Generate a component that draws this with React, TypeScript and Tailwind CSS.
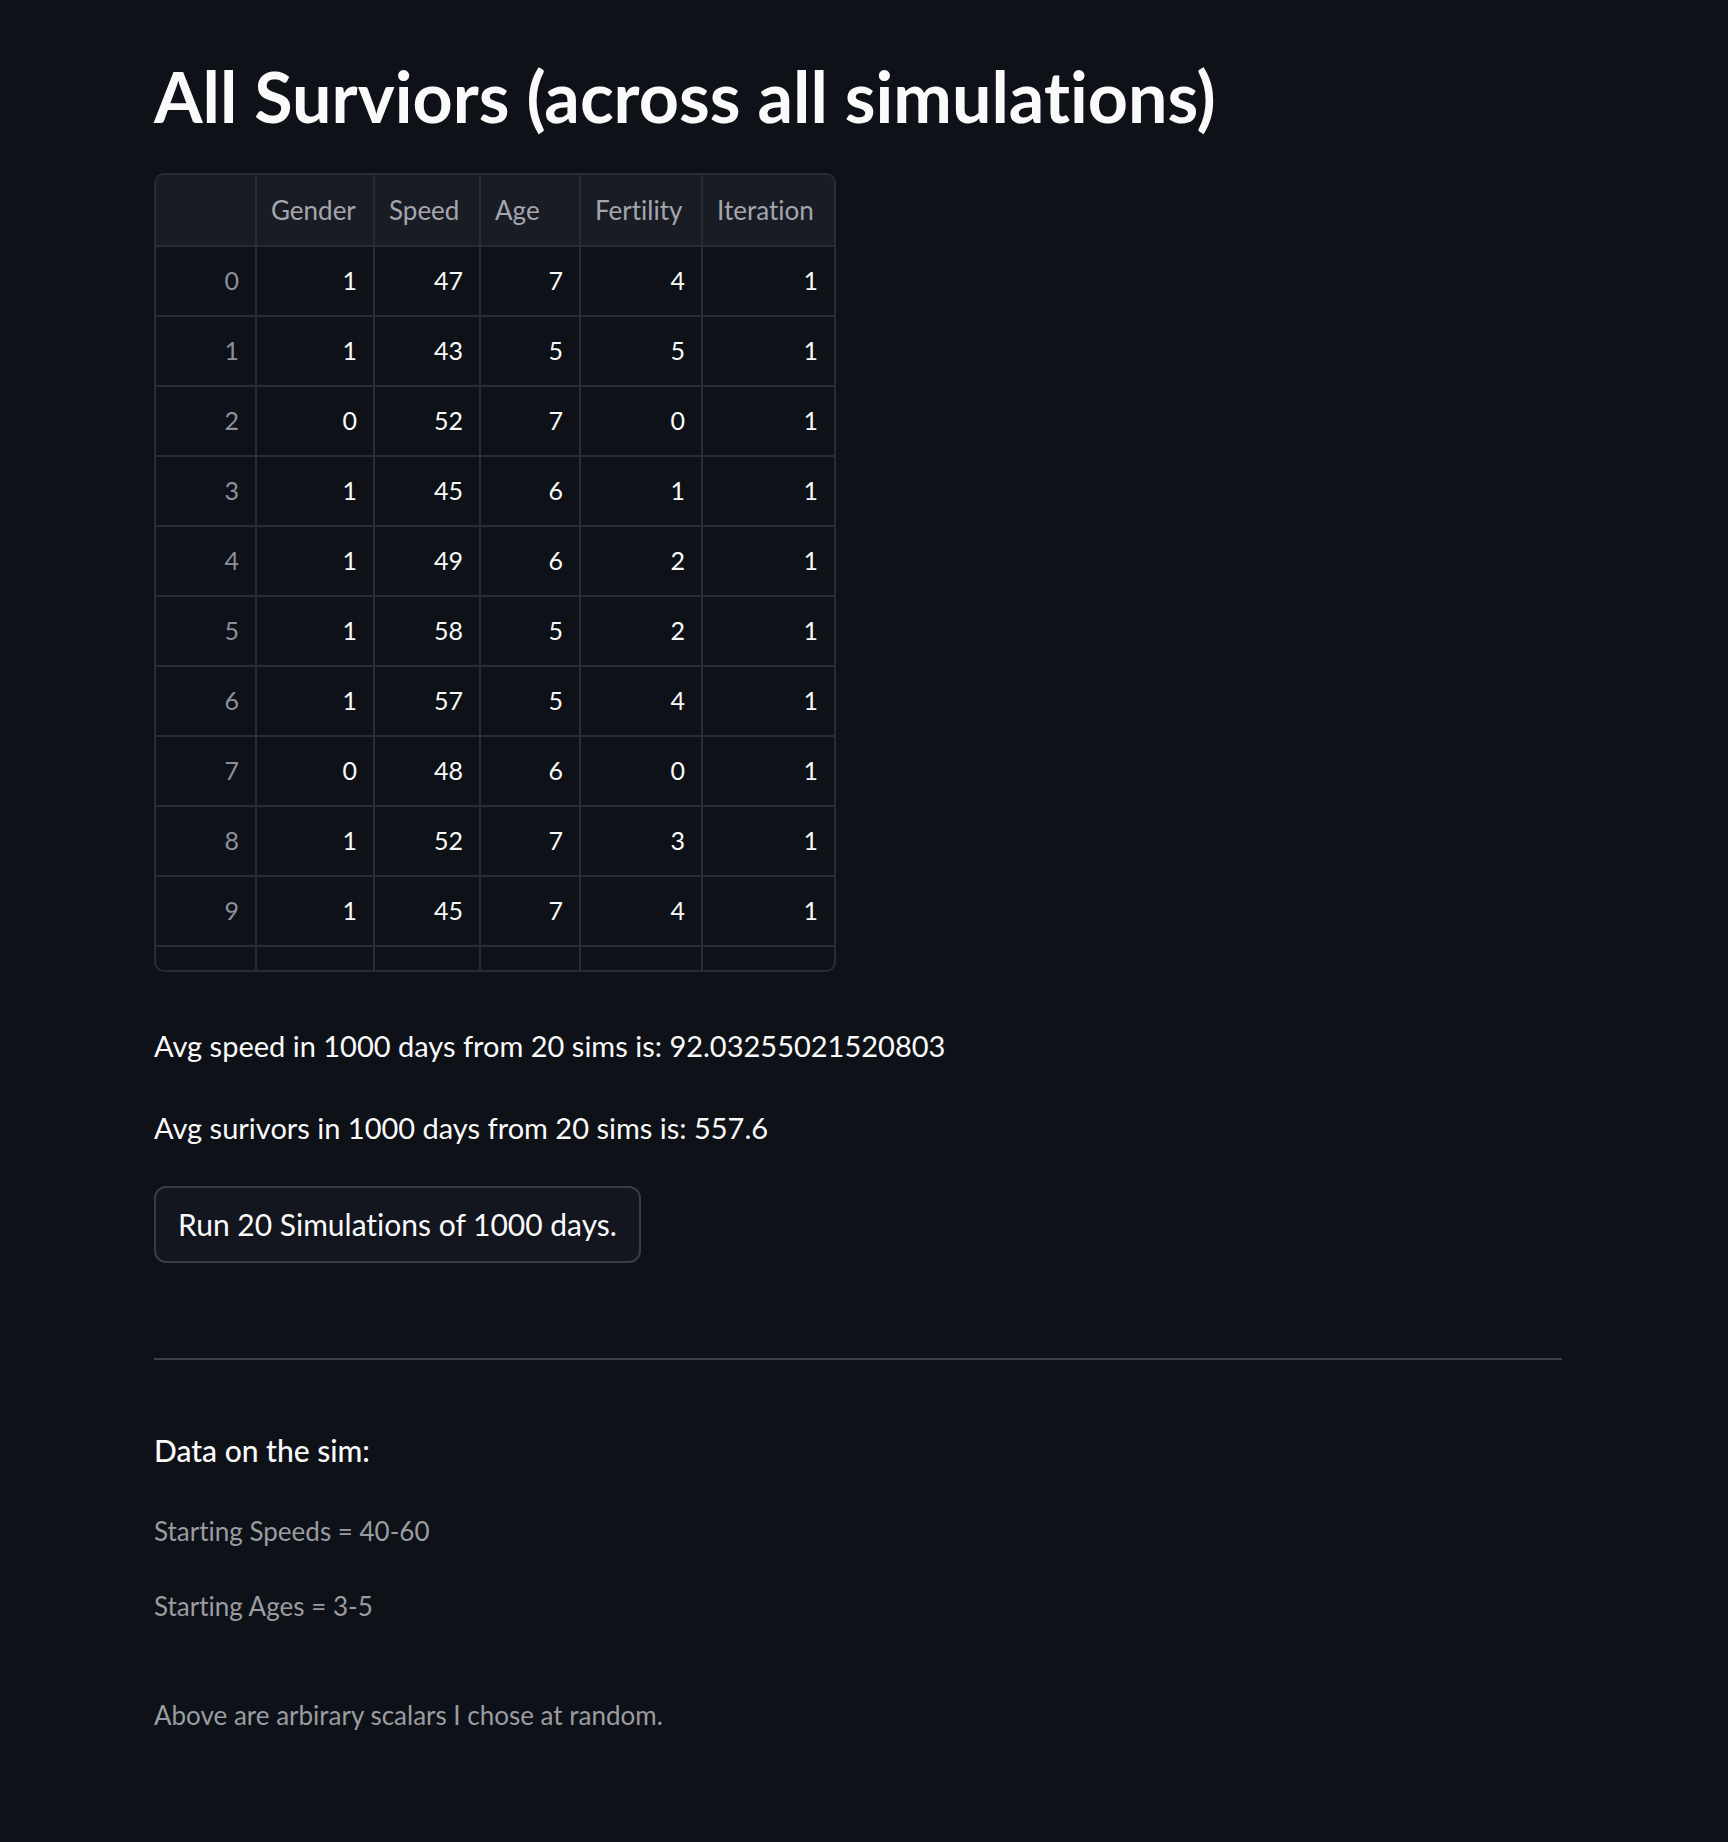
const rows = [
  [1, 47, 7, 4, 1],
  [1, 43, 5, 5, 1],
  [0, 52, 7, 0, 1],
  [1, 45, 6, 1, 1],
  [1, 49, 6, 2, 1],
  [1, 58, 5, 2, 1],
  [1, 57, 5, 4, 1],
  [0, 48, 6, 0, 1],
  [1, 52, 7, 3, 1],
  [1, 45, 7, 4, 1],
];

const headers = ["Gender", "Speed", "Age", "Fertility", "Iteration"];
const widths = ["w-[101px]", "w-[118px]", "w-[106px]", "w-[100px]", "w-[122px]", "w-[131px]"];

function DataTable() {
  return (
    <div className="w-[682px] overflow-hidden rounded-[10px] border-2 border-[#2a2c34]">
      <div className="flex h-[72px] border-b-2 border-[#2a2c34] bg-[#1a1c24]">
        <div className={`${widths[0]} border-r-2 border-[#2a2c34]`} />
        {headers.map((h, i) => (
          <div
            key={h}
            className={`${widths[i + 1]} flex items-center px-[14px] text-[26px] text-[#a3a6ae] ${
              i < headers.length - 1 ? "border-r-2 border-[#2a2c34]" : ""
            }`}
          >
            {h}
          </div>
        ))}
      </div>

      {rows.map((row, r) => (
        <div key={r} className="flex h-[70px] border-b-2 border-[#2a2c34]">
          <div className={`${widths[0]} flex items-center justify-end border-r-2 border-[#2a2c34] px-[16px] text-[25px] text-[#8d9097]`}>
            {r}
          </div>
          {row.map((v, i) => (
            <div
              key={i}
              className={`${widths[i + 1]} flex items-center justify-end px-[16px] text-[25px] text-[#fafafa] ${
                i < row.length - 1 ? "border-r-2 border-[#2a2c34]" : ""
              }`}
            >
              {v}
            </div>
          ))}
        </div>
      ))}

      <div className="flex h-[23px]">
        {widths.map((w, i) => (
          <div key={i} className={`${w} ${i < widths.length - 1 ? "border-r-2 border-[#2a2c34]" : ""}`} />
        ))}
      </div>
    </div>
  );
}

export default function App() {
  return (
    <div className="min-h-screen bg-[#0e1117] font-['Lato',sans-serif] text-[#fafafa] [font-variant-ligatures:none]">
      <div className="w-[1562px] pl-[154px] pt-[61px]">
        <h1 className="text-[70px] font-bold leading-none">All Surviors (across all simulations)</h1>

        <div className="mt-[42px]">
          <DataTable />
        </div>

        <p className="mt-[56px] text-[29px] leading-[36px]">
          Avg speed in 1000 days from 20 sims is: 92.03255021520803
        </p>
        <p className="mt-[46px] text-[29px] leading-[36px]">Avg surivors in 1000 days from 20 sims is: 557.6</p>

        <button className="mt-[40px] h-[77px] rounded-[12px] border-2 border-[#3a3c44] bg-[#13161e] px-[22px] text-[30px]">
          Run 20 Simulations of 1000 days.
        </button>

        <hr className="mt-[95px] border-t-2 border-[#3d3f46]" />

        <h5 className="mt-[72px] text-[30px] font-medium leading-[36px]">Data on the sim:</h5>
        <p className="mt-[47px] text-[26px] leading-[32px] text-[#9a9ca2]">Starting Speeds = 40-60</p>
        <p className="mt-[43px] text-[26px] leading-[32px] text-[#9a9ca2]">Starting Ages = 3-5</p>
        <p className="mt-[77px] text-[26px] leading-[32px] text-[#9a9ca2]">
          Above are arbirary scalars I chose at random.
        </p>
      </div>
    </div>
  );
}
